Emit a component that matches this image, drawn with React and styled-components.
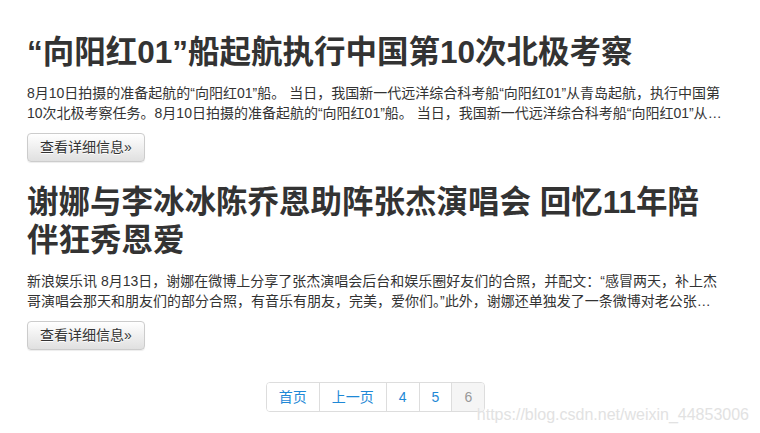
import React from "react";
import styled, { createGlobalStyle } from "styled-components";

const Global = createGlobalStyle`
  html, body { margin: 0; padding: 0; background: #fff; }
  body {
    font-family: "Liberation Sans", "Noto Sans CJK SC", sans-serif;
    font-size: 14px;
    line-height: 20px;
    color: #333;
  }
`;

const Page = styled.div`
  position: relative;
  width: 760px;
  height: 433px;
  overflow: hidden;
`;

const Container = styled.main`
  width: 699px;
  padding: 33px 0 0 27px;
  display: flex;
  flex-direction: column;
`;

const Article = styled.article`
  display: flex;
  flex-direction: column;
  align-items: flex-start;
  margin-bottom: ${(p) => p.$gap}px;
`;

const Title = styled.h2`
  margin: 0 0 12px;
  max-width: 690px;
  font-size: 31.5px;
  line-height: 38px;
  font-weight: 700;
  color: #333;
`;

const Summary = styled.p`
  margin: 0 0 10px;
  max-width: ${(p) => p.$width}px;
  font-size: 14px;
  line-height: 20px;
  display: -webkit-box;
  -webkit-box-orient: vertical;
  -webkit-line-clamp: 2;
  overflow: hidden;
`;

const MoreButton = styled.a`
  display: inline-block;
  box-sizing: border-box;
  height: 29px;
  padding: 4px 12px;
  font-size: 14px;
  line-height: 19px;
  color: #333;
  text-decoration: none;
  border: 1px solid #ccc;
  border-radius: 4px;
  background-image: linear-gradient(to bottom, #fff 0%, #e0e0e0 100%);
  box-shadow: inset 0 1px 0 rgba(255, 255, 255, 0.15), 0 1px 1px rgba(0, 0, 0, 0.075);
  text-shadow: 0 1px 0 #fff;
`;

const Pager = styled.nav`
  display: flex;
  justify-content: center;
  padding-right: 2px;
`;

const PagerList = styled.ul`
  display: flex;
  margin: 0;
  padding: 0;
  list-style: none;
  border: 1px solid #ddd;
  border-radius: 4px;
  overflow: hidden;
`;

const PageItem = styled.li`
  box-sizing: border-box;
  height: 28px;
  padding: 4px 12px;
  font-size: 14px;
  line-height: 20px;
  color: ${(p) => (p.$current ? "#999" : "#1e88d6")};
  background: ${(p) => (p.$current ? "#f5f5f5" : "#fff")};
  border-left: ${(p) => (p.$first ? "none" : "1px solid #ddd")};
  min-width: ${(p) => (p.$num ? "32px" : "auto")};
  text-align: center;
`;

const Watermark = styled.div`
  position: absolute;
  right: 11px;
  bottom: 9px;
  font-family: "Liberation Sans", sans-serif;
  font-size: 16px;
  line-height: 18px;
  color: #e2e2e2;
  text-shadow: 0 0 1px rgba(255, 255, 255, 0.9);
`;

const articles = [
  {
    title: "“向阳红01”船起航执行中国第10次北极考察",
    text:
      "8月10日拍摄的准备起航的“向阳红01”船。 当日，我国新一代远洋综合科考船“向阳红01”从青岛起航，执行中国第10次北极考察任务。8月10日拍摄的准备起航的“向阳红01”船。 当日，我国新一代远洋综合科考船“向阳红01”从青岛起航，执行中国第10次北极考察任务。",
    gap: 21,
    width: 699,
  },
  {
    title: "谢娜与李冰冰陈乔恩助阵张杰演唱会 回忆11年陪伴狂秀恩爱",
    text:
      "新浪娱乐讯 8月13日，谢娜在微博上分享了张杰演唱会后台和娱乐圈好友们的合照，并配文：“感冒两天，补上杰哥演唱会那天和朋友们的部分合照，有音乐有朋友，完美，爱你们。”此外，谢娜还单独发了一条微博对老公张杰表白，回忆两人11年的陪伴。",
    gap: 32,
    width: 692,
  },
];

const pages = [
  { label: "首页" },
  { label: "上一页" },
  { label: "4", num: true },
  { label: "5", num: true },
  { label: "6", num: true, current: true },
];

export default function App() {
  return (
    <Page>
      <Global />
      <Container>
        {articles.map((a) => (
          <Article key={a.title} $gap={a.gap}>
            <Title>{a.title}</Title>
            <Summary $width={a.width}>{a.text}</Summary>
            <MoreButton href="#">查看详细信息»</MoreButton>
          </Article>
        ))}
        <Pager>
          <PagerList>
            {pages.map((p, i) => (
              <PageItem key={p.label} $first={i === 0} $num={p.num} $current={p.current}>
                {p.label}
              </PageItem>
            ))}
          </PagerList>
        </Pager>
      </Container>
      <Watermark>https://blog.csdn.net/weixin_44853006</Watermark>
    </Page>
  );
}
